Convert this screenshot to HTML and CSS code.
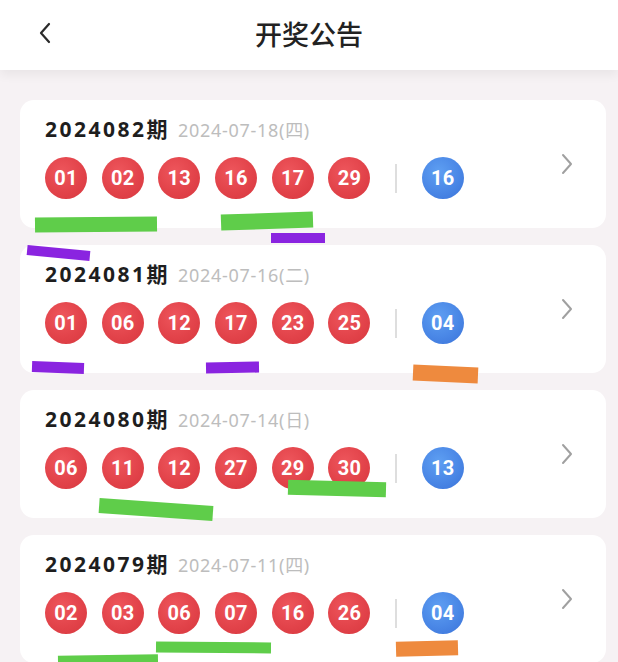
FILE: index.html
```html
<!DOCTYPE html>
<html lang="zh-CN">
<head>
<meta charset="utf-8">
<title>开奖公告</title>
<link rel="stylesheet" href="styles.css">
</head>
<body>
<div class="page">
  <header class="topbar">
    <span class="back">
      <svg width="14" height="22" viewBox="0 0 14 22"><path d="M11 2 L3 11 L11 20" fill="none" stroke="#2a2a2a" stroke-width="2.2" stroke-linecap="round" stroke-linejoin="round"/></svg>
    </span>
    <h1 class="title">开奖公告</h1>
  </header>

  <main class="list">
    <section class="card">
      <div class="info">
        <div class="head"><span class="issue">2024082期</span><span class="date">2024-07-18(四)</span></div>
        <div class="balls">
          <span class="ball red">01</span><span class="ball red">02</span><span class="ball red">13</span><span class="ball red">16</span><span class="ball red">17</span><span class="ball red">29</span>
          <span class="sep"></span>
          <span class="ball blue">16</span>
        </div>
      </div>
      <svg class="arrow" width="12" height="22" viewBox="0 0 12 22"><path d="M2 2 L10 11 L2 20" fill="none" stroke="#a0a0a0" stroke-width="2" stroke-linecap="round" stroke-linejoin="round"/></svg>
    </section>

    <section class="card">
      <div class="info">
        <div class="head"><span class="issue">2024081期</span><span class="date">2024-07-16(二)</span></div>
        <div class="balls">
          <span class="ball red">01</span><span class="ball red">06</span><span class="ball red">12</span><span class="ball red">17</span><span class="ball red">23</span><span class="ball red">25</span>
          <span class="sep"></span>
          <span class="ball blue">04</span>
        </div>
      </div>
      <svg class="arrow" width="12" height="22" viewBox="0 0 12 22"><path d="M2 2 L10 11 L2 20" fill="none" stroke="#a0a0a0" stroke-width="2" stroke-linecap="round" stroke-linejoin="round"/></svg>
    </section>

    <section class="card">
      <div class="info">
        <div class="head"><span class="issue">2024080期</span><span class="date">2024-07-14(日)</span></div>
        <div class="balls">
          <span class="ball red">06</span><span class="ball red">11</span><span class="ball red">12</span><span class="ball red">27</span><span class="ball red">29</span><span class="ball red">30</span>
          <span class="sep"></span>
          <span class="ball blue">13</span>
        </div>
      </div>
      <svg class="arrow" width="12" height="22" viewBox="0 0 12 22"><path d="M2 2 L10 11 L2 20" fill="none" stroke="#a0a0a0" stroke-width="2" stroke-linecap="round" stroke-linejoin="round"/></svg>
    </section>

    <section class="card">
      <div class="info">
        <div class="head"><span class="issue">2024079期</span><span class="date">2024-07-11(四)</span></div>
        <div class="balls">
          <span class="ball red">02</span><span class="ball red">03</span><span class="ball red">06</span><span class="ball red">07</span><span class="ball red">16</span><span class="ball red">26</span>
          <span class="sep"></span>
          <span class="ball blue">04</span>
        </div>
      </div>
      <svg class="arrow" width="12" height="22" viewBox="0 0 12 22"><path d="M2 2 L10 11 L2 20" fill="none" stroke="#a0a0a0" stroke-width="2" stroke-linecap="round" stroke-linejoin="round"/></svg>
    </section>
  </main>

  <div class="marks">
    <i class="mark green" style="left:35px;top:217px;width:122px;height:15px;transform:rotate(-0.5deg)"></i>
    <i class="mark green" style="left:221px;top:213px;width:92px;height:16px;transform:rotate(-2deg)"></i>
    <i class="mark purple" style="left:271px;top:233px;width:54px;height:10px"></i>
    <i class="mark purple" style="left:27px;top:248px;width:63px;height:10px;transform:rotate(5.5deg)"></i>
    <i class="mark purple" style="left:32px;top:362px;width:52px;height:11px;transform:rotate(2deg)"></i>
    <i class="mark purple" style="left:206px;top:362px;width:53px;height:11px;transform:rotate(-1deg)"></i>
    <i class="mark orange" style="left:413px;top:366px;width:65px;height:16px;transform:rotate(2.5deg)"></i>
    <i class="mark green" style="left:99px;top:502px;width:114px;height:15px;transform:rotate(4deg)"></i>
    <i class="mark green" style="left:288px;top:481px;width:98px;height:15px;transform:rotate(1.5deg)"></i>
    <i class="mark green" style="left:156px;top:642px;width:115px;height:11px;transform:rotate(0.5deg)"></i>
    <i class="mark green" style="left:58px;top:655px;width:100px;height:12px;transform:rotate(-1deg)"></i>
    <i class="mark orange" style="left:396px;top:641px;width:62px;height:15px;transform:rotate(-1.5deg)"></i>
  </div>
</div>
</body>
</html>
```

FILE: styles.css
```css
* { box-sizing: border-box; }
html, body {
  margin: 0;
  padding: 0;
  height: 100%;
  overflow: hidden;
}
body {
  background: #f6f2f4;
  font-family: "Noto Sans", "Noto Sans CJK SC", sans-serif;
  color: #222;
}
.page {
  position: relative;
  height: 662px;
  overflow: hidden;
}
.topbar {
  position: relative;
  height: 70px;
  background: #fff;
  display: flex;
  align-items: center;
  justify-content: center;
  box-shadow: 0 5px 10px rgba(0, 0, 0, 0.055);
  z-index: 1;
}
.back {
  position: absolute;
  left: 38px;
  top: 22px;
  width: 14px;
  height: 22px;
  display: flex;
}
.title {
  margin: 0;
  font-family: "Noto Sans CJK SC", sans-serif;
  font-size: 27px;
  font-weight: 500;
  color: #222;
  line-height: 1;
  margin-top: -4px;
}
.list {
  display: flex;
  flex-direction: column;
  gap: 17px;
  padding: 30px 12px 0 20px;
}
.card {
  background: #fff;
  border-radius: 14px;
  height: 128px;
  flex: none;
  display: flex;
  align-items: center;
  justify-content: space-between;
  padding: 0 33px 0 25px;
}
.info {
  display: flex;
  flex-direction: column;
  align-self: stretch;
  padding-top: 13px;
}
.head {
  display: flex;
  align-items: baseline;
  gap: 8px;
  height: 30px;
}
.issue {
  font-family: "Noto Sans", "Noto Sans CJK SC", sans-serif;
  font-weight: 700;
  font-size: 21px;
  letter-spacing: 2.5px;
  color: #1e1e1e;
}
.date {
  font-family: "Noto Sans", "Noto Sans CJK SC", sans-serif;
  font-size: 18px;
  color: #bdbdbd;
  letter-spacing: 0.7px;
}
.balls {
  display: flex;
  align-items: center;
  gap: 14.7px;
  margin-top: 14px;
}
.ball {
  width: 42px;
  height: 42px;
  border-radius: 50%;
  flex: none;
  display: flex;
  align-items: center;
  justify-content: center;
  color: #fff;
  font-family: "Roboto", "Noto Sans", sans-serif;
  font-weight: 700;
  font-size: 20px;
  letter-spacing: 0.3px;
}
.red {
  background: radial-gradient(circle at 40% 35%, #ee565c 0%, #e2434a 55%, #d7373e 100%);
}
.blue {
  background: radial-gradient(circle at 40% 35%, #5e9ff2 0%, #4a87e6 55%, #3a72d8 100%);
}
.sep {
  width: 2px;
  height: 29px;
  background: #dedede;
  margin: 0 10px;
  flex: none;
}
.arrow {
  flex: none;
}
.marks {
  position: absolute;
  inset: 0;
  pointer-events: none;
  z-index: 2;
}
.mark {
  position: absolute;
  display: block;
}
.green { background: #5fcd4a; }
.purple { background: #8a24e0; }
.orange { background: #ee8a3e; }
```
